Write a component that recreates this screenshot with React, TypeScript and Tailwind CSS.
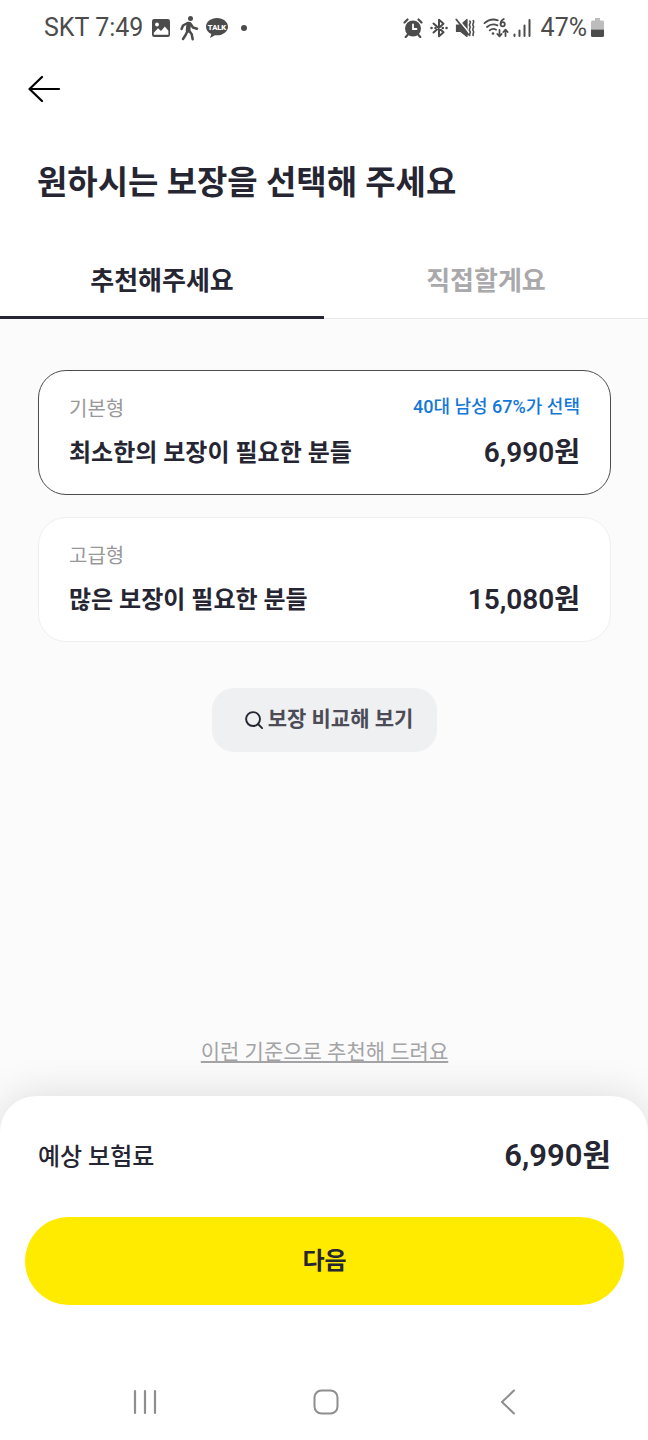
import { useState } from "react";

type Plan = { id: string; grade: string; note?: string; title: string; price: string };

const plans: Plan[] = [
  { id: "basic", grade: "기본형", note: "40대 남성 67%가 선택", title: "최소한의 보장이 필요한 분들", price: "6,990원" },
  { id: "premium", grade: "고급형", title: "많은 보장이 필요한 분들", price: "15,080원" },
];

const tabs = ["추천해주세요", "직접할게요"];

function StatusBar() {
  return (
    <div className="flex h-14 items-center justify-between px-11 text-[25px] text-[#4c4c4c]">
      <div className="flex items-center">
        <span>SKT 7:49</span>
        <svg className="ml-2" width="20" height="20" viewBox="0 0 20 20" aria-hidden="true">
          <rect x="1" y="1" width="18" height="18" rx="2.200" fill="currentColor" />
          <circle cx="6" cy="6.500" r="1.900" fill="#fff" />
          <path d="M2.800 14.800 7 10.200l3 2.700 3.800-4.400 3.600 4.200v4.100H2.800Z" fill="#fff" />
        </svg>
        <svg className="ml-2" width="20" height="26" viewBox="0 0 20 26" fill="none" stroke="currentColor" strokeLinecap="round" strokeLinejoin="round" aria-hidden="true">
          <circle cx="11.500" cy="3.600" r="2.500" fill="currentColor" stroke="none" />
          <path d="M9.800 9 9 15.500" strokeWidth="4.600" />
          <path d="M8.600 8 4 10.500 2.600 14M11.300 8.500l2.700 4 4 1.200M8.300 16.500 6.600 20 4 24M10.200 15.800l2.500 3.400 1 5" strokeWidth="2.500" />
        </svg>
        <svg className="ml-1.5" width="24" height="22" viewBox="0 0 24 22" aria-hidden="true">
          <path fill="currentColor" d="M12 1C5.900 1 1 4.900 1 9.700c0 3.200 2.100 5.900 5.300 7.400L5 21l5-2.800c.7.1 1.300.1 2 .1 6.100 0 11-3.900 11-8.600S18.100 1 12 1Z" />
          <text x="12" y="12.500" textAnchor="middle" fill="#fff" fontSize="7.500" fontWeight="900" fontFamily="Roboto, sans-serif">
            TALK
          </text>
        </svg>
        <span className="ml-3 size-1.5 rounded-full bg-[#4c4c4c]" />
      </div>
      <div className="flex items-center">
        <svg width="20" height="20" viewBox="0 0 20 20" fill="none" stroke="currentColor" strokeLinecap="round" aria-hidden="true">
          <circle cx="10" cy="10.500" r="8" fill="currentColor" stroke="none" />
          <path d="M1.500 4.500 4.500 1.500M18.500 4.500l-3-3M4.500 17l-1.800 2M15.500 17l1.800 2" strokeWidth="2.200" />
          <path d="M10 6.500v4.500h3.500" stroke="#fff" strokeWidth="1.800" />
        </svg>
        <svg className="ml-1.5" width="20" height="20" viewBox="0 0 20 20" fill="none" stroke="currentColor" strokeWidth="2" strokeLinecap="round" strokeLinejoin="round" aria-hidden="true">
          <path d="m4.500 5.500 10 8.800-4.500 4V1.700l4.500 4-10 8.800" />
          <path d="M2.500 10h.1M6.500 10h.1M13.700 10h.1M17.500 10h.1" strokeWidth="2.500" />
        </svg>
        <svg className="ml-1.5" width="20" height="20" viewBox="0 0 20 20" fill="none" stroke="currentColor" strokeLinecap="round" strokeLinejoin="round" aria-hidden="true">
          <path d="M1.500 7h4.200L12 1.500v17L5.700 13.500H1.500Z" fill="currentColor" strokeWidth="1.200" />
          <path d="M2.500 .5 14 14.500" stroke="#fff" strokeWidth="1.600" />
          <path d="M1.300 1.500 13.300 16.500" strokeWidth="1.800" />
          <path d="M14.800 3c2 2-1.500 3 0 5s-1.500 3 0 5-1 2.500 0 4.500M18.200 2.500c1.700 2-1.400 3.200 0 5.200s-1.400 3 0 5-1 2.500 0 4.800" strokeWidth="1.600" />
        </svg>
        <svg className="ml-2" width="26" height="22" viewBox="0 0 26 22" fill="none" stroke="currentColor" strokeWidth="1.800" strokeLinecap="round" strokeLinejoin="round" aria-hidden="true">
          <path d="M1.500 6.200C5.500 2.600 10.300 1.800 14.800 3.300M4 10c3-2.600 6.800-3.200 10.400-1.600M6.700 13.400c1.900-1.600 4.300-1.800 6.400-.7" />
          <circle cx="10" cy="16.500" r="1.300" fill="currentColor" stroke="none" />
          <path d="M20.800 2c-2.100.9-3.200 2.600-3.200 4.700" />
          <circle cx="19.700" cy="7.300" r="2.100" />
          <path d="M16.500 13v6M14.300 17l2.200 2.300 2.200-2.300M22.500 19v-6M20.300 15l2.200-2.300 2.200 2.300" />
        </svg>
        <svg className="ml-1" width="18" height="20" viewBox="0 0 18 20" stroke="currentColor" strokeWidth="2" strokeLinecap="round" aria-hidden="true">
          <path d="M1.500 16.500V18M6.500 12.500V18M11.500 7.500V18M16.500 2V18" />
        </svg>
        <span className="ml-2.5">47%</span>
        <svg className="ml-1" width="13" height="20" viewBox="0 0 13 20" aria-hidden="true">
          <path d="M4 0h5v2.500h2.500A1.500 1.500 0 0 1 13 4v7.500H0V4a1.500 1.500 0 0 1 1.500-1.500H4Z" fill="#bdbdbd" />
          <path d="M0 11.500h13v6A1.500 1.500 0 0 1 11.500 19h-10A1.500 1.500 0 0 1 0 17.500Z" fill="currentColor" />
        </svg>
      </div>
    </div>
  );
}

function PlanCard({ plan, selected, onSelect }: { plan: Plan; selected: boolean; onSelect: () => void }) {
  return (
    <label
      className={`flex h-[125px] cursor-pointer flex-col justify-center gap-2 rounded-[28px] border bg-white px-[30px] ${
        selected ? "border-[#4b4b50]" : "border-[#efeff0]"
      }`}
    >
      <input type="radio" name="plan" value={plan.id} checked={selected} onChange={onSelect} className="sr-only" />
      <span className="flex h-8 items-center justify-between">
        <span className="text-xl text-[#98989a]">{plan.grade}</span>
        {plan.note && <span className="self-start text-lg font-medium text-[#1478d8]">{plan.note}</span>}
      </span>
      <span className="flex h-10 items-center justify-between text-[#262633]">
        <span className="text-2xl font-semibold">{plan.title}</span>
        <span className="text-[28px] font-semibold">{plan.price}</span>
      </span>
    </label>
  );
}

export default function App() {
  const [tab, setTab] = useState(0);
  const [planId, setPlanId] = useState("basic");
  const current = plans.find((p) => p.id === planId) ?? plans[0];

  return (
    <div className="flex min-h-screen flex-col bg-[#fbfbfb] font-[Roboto,'Noto_Sans_CJK_KR',sans-serif] text-[#262633]">
      <header className="bg-white">
        <StatusBar />
        <div className="flex h-[66px] items-center px-7">
          <button type="button" aria-label="뒤로" className="text-black">
            <svg width="34" height="28" viewBox="0 0 34 28" fill="none" stroke="currentColor" strokeWidth="2.200" strokeLinecap="round" strokeLinejoin="round" aria-hidden="true">
              <path d="M31 14H1.500M14 2 1.500 14 14 26" />
            </svg>
          </button>
        </div>
        <h1 className="px-[37px] pt-[37px] text-[33px] leading-[48px] font-bold">원하시는 보장을 선택해 주세요</h1>
        <div role="tablist" className="mt-[35px] flex h-[77px] border-b border-[#e9e9ea]">
          {tabs.map((label, i) => (
            <button
              key={label}
              type="button"
              role="tab"
              aria-selected={tab === i}
              onClick={() => setTab(i)}
              className={`-mb-px flex-1 border-b-3 pt-1 text-[26px] font-bold ${
                tab === i ? "border-[#262633] text-[#262633]" : "border-transparent text-[#a9a9ab]"
              }`}
            >
              {label}
            </button>
          ))}
        </div>
      </header>

      <main className="flex flex-1 flex-col pt-[51px] pr-[37px] pb-7 pl-[38px]">
        <div role="radiogroup" aria-label="보장 유형" className="flex flex-col gap-[22px]">
          {plans.map((plan) => (
            <PlanCard key={plan.id} plan={plan} selected={plan.id === planId} onSelect={() => setPlanId(plan.id)} />
          ))}
        </div>
        <button type="button" className="mt-[46px] flex h-16 items-center gap-1 self-center rounded-[22px] bg-[#eff0f2] pr-6 pl-8 text-[21px] font-bold text-[#4c4c56]">
          <svg width="20" height="20" viewBox="0 0 21 21" fill="none" stroke="#262633" strokeWidth="2" strokeLinecap="round" aria-hidden="true">
            <circle cx="9.500" cy="9.500" r="7.300" />
            <path d="m15 15 4 4" />
          </svg>
          보장 비교해 보기
        </button>
        <a href="#criteria" className="mt-auto self-center text-[21px] leading-8 text-[#a4a4a6] underline underline-offset-2">
          이런 기준으로 추천해 드려요
        </a>
      </main>

      <footer className="rounded-t-[36px] bg-white shadow-[0_0_40px_rgba(0,0,0,0.13)]">
        <div className="flex h-[121px] items-center justify-between pr-[37px] pl-[38px]">
          <span className="text-2xl font-medium">예상 보험료</span>
          <strong className="text-[31px] font-semibold">{current.price}</strong>
        </div>
        <div className="pr-6 pl-[25px]">
          <button type="button" className="h-[88px] w-full rounded-full bg-[#ffeb00] text-2xl font-bold">
            다음
          </button>
        </div>
        <nav className="mt-[59px] flex h-[76px] items-center justify-around pr-[49px] pl-[54px] text-[#8e8e8e]">
          <button type="button" aria-label="최근 앱">
            <svg width="26" height="26" viewBox="0 0 26 26" stroke="currentColor" strokeWidth="2.200" strokeLinecap="round" aria-hidden="true">
              <path d="M3 2v22M13 2v22M23 2v22" />
            </svg>
          </button>
          <button type="button" aria-label="홈">
            <svg width="26" height="26" viewBox="0 0 26 26" fill="none" stroke="currentColor" strokeWidth="2" aria-hidden="true">
              <rect x="1.500" y="1.500" width="23" height="23" rx="7" />
            </svg>
          </button>
          <button type="button" aria-label="이전">
            <svg width="26" height="26" viewBox="0 0 26 26" fill="none" stroke="currentColor" strokeWidth="2" strokeLinecap="round" strokeLinejoin="round" aria-hidden="true">
              <path d="M19 1.500 7 13l12 11.500" />
            </svg>
          </button>
        </nav>
      </footer>
    </div>
  );
}
